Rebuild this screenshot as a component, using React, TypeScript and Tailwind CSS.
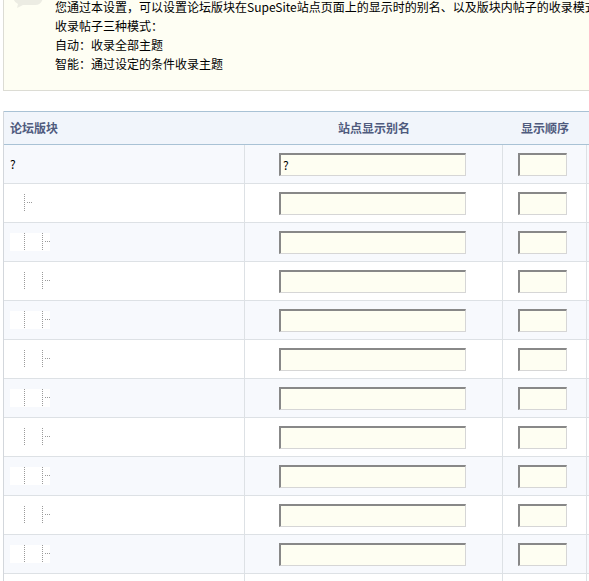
import React from 'react';

const rows = [
  { name: '?', alias: '?', depth: 0 },
  { name: '', alias: '', depth: 1 },
  ...Array.from({ length: 10 }, () => ({ name: '', alias: '', depth: 2 })),
];

function TreeLines({ depth }: { depth: number }) {
  const w = depth === 1 ? 24 : 40;
  const x1 = 14.5;
  const x2 = 32.5;
  return (
    <svg width={w} height={18} className="block bg-white" shapeRendering="crispEdges">
      <line x1={x1} y1={0} x2={x1} y2={18} stroke="#9a9a9a" strokeWidth={1} strokeDasharray="1 1" />
      {depth === 1 ? (
        <line x1={17} y1={8.5} x2={22} y2={8.5} stroke="#9a9a9a" strokeWidth={1} strokeDasharray="1 1" />
      ) : (
        <>
          <line x1={x2} y1={0} x2={x2} y2={18} stroke="#9a9a9a" strokeWidth={1} strokeDasharray="1 1" />
          <line x1={35} y1={8.5} x2={40} y2={8.5} stroke="#9a9a9a" strokeWidth={1} strokeDasharray="1 1" />
        </>
      )}
    </svg>
  );
}

function TextBox({ value, width }: { value: string; width: string }) {
  return (
    <div
      className={`${width} h-[23px] bg-[#fefef2] border-t-2 border-l-2 border-r border-b border-t-[#888888] border-l-[#888888] border-r-[#d6d6d6] border-b-[#d6d6d6] pl-[2px] leading-[19px] text-[12px]`}
    >
      {value}
    </div>
  );
}

export default function App() {
  return (
    <div className="h-[581px] w-[589px] overflow-hidden bg-white text-[12px] text-black font-['Noto_Sans_CJK_SC',sans-serif]">
      <div className="w-[860px] pl-[3px]">
        {/* Tip box */}
        <div className="relative -mt-[3px] border-l border-b border-[#dcdcd4] bg-[#fefef3] pl-[51px] pb-[17px] leading-[19px]">
          <svg className="absolute left-[7px] -top-[16px]" width="34" height="27" viewBox="0 0 34 27">
            <path d="M2 0 H32 V14 Q32 24 24 24 H12 L6 27 L7 23 Q2 21 2 14 Z" fill="#ececE3" />
          </svg>
          <p className="whitespace-nowrap">您通过本设置，可以设置论坛版块在SupeSite站点页面上的显示时的别名、以及版块内帖子的收录模式。</p>
          <p>收录帖子三种模式：</p>
          <p>自动：收录全部主题</p>
          <p>智能：通过设定的条件收录主题</p>
        </div>

        {/* Table */}
        <div className="mt-[20px] border-l border-[#d3d7dc]">
          <div className="flex h-[34px] items-center border-t border-b border-[#a9c2d5] bg-[#f1f5fb] font-bold text-[#4f5b7e]">
            <div className="w-[241px] pl-[6px]">论坛版块</div>
            <div className="w-[258px] text-center">站点显示别名</div>
            <div className="w-[84px] text-center">显示顺序</div>
            <div className="flex-1" />
          </div>
          {rows.map((r, i) => (
            <div
              key={i}
              className={`flex h-[39px] border-b border-[#dde1e5] ${i % 2 === 0 ? 'bg-[#f7f9fd]' : 'bg-white'}`}
            >
              <div className="flex w-[241px] items-center border-r border-[#dde1e5] pl-[6px]">
                {r.depth === 0 ? <span>{r.name}</span> : <TreeLines depth={r.depth} />}
              </div>
              <div className="flex w-[258px] items-center border-r border-[#dde1e5] pl-[34px]">
                <TextBox value={r.alias} width="w-[187px]" />
              </div>
              <div className="flex w-[84px] items-center border-r border-[#dde1e5] pl-[15px]">
                <TextBox value="" width="w-[49px]" />
              </div>
              <div className="flex-1" />
            </div>
          ))}
        </div>
      </div>
    </div>
  );
}
